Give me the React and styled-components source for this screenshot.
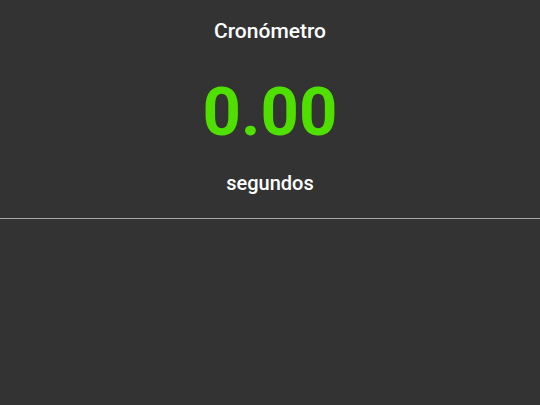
import React from "react";
import styled, { createGlobalStyle } from "styled-components";

const Global = createGlobalStyle`
  html, body { margin: 0; padding: 0; background: #333333; }
  body { font-family: Roboto, "Open Sans", sans-serif; }
`;

const Page = styled.div`
  width: 540px;
  height: 405px;
  background: #333333;
  display: flex;
  flex-direction: column;
`;

const Header = styled.header`
  display: flex;
  flex-direction: column;
  align-items: center;
  padding-top: 19px;
  height: 219px;
  box-sizing: border-box;
  border-bottom: 1px solid #a8a8a8;
`;

const Title = styled.h1`
  margin: 0;
  font-size: 21px;
  line-height: 24px;
  font-weight: 500;
  color: #ffffff;
`;

const Time = styled.div`
  margin-top: 35px;
  font-size: 67px;
  line-height: 68px;
  font-weight: 700;
  color: #50e000;
`;

const Unit = styled.div`
  margin-top: 25px;
  font-size: 20px;
  line-height: 24px;
  font-weight: 500;
  color: #ffffff;
`;

export default function App() {
  return (
    <Page>
      <Global />
      <Header>
        <Title>Cronómetro</Title>
        <Time>0.00</Time>
        <Unit>segundos</Unit>
      </Header>
    </Page>
  );
}
